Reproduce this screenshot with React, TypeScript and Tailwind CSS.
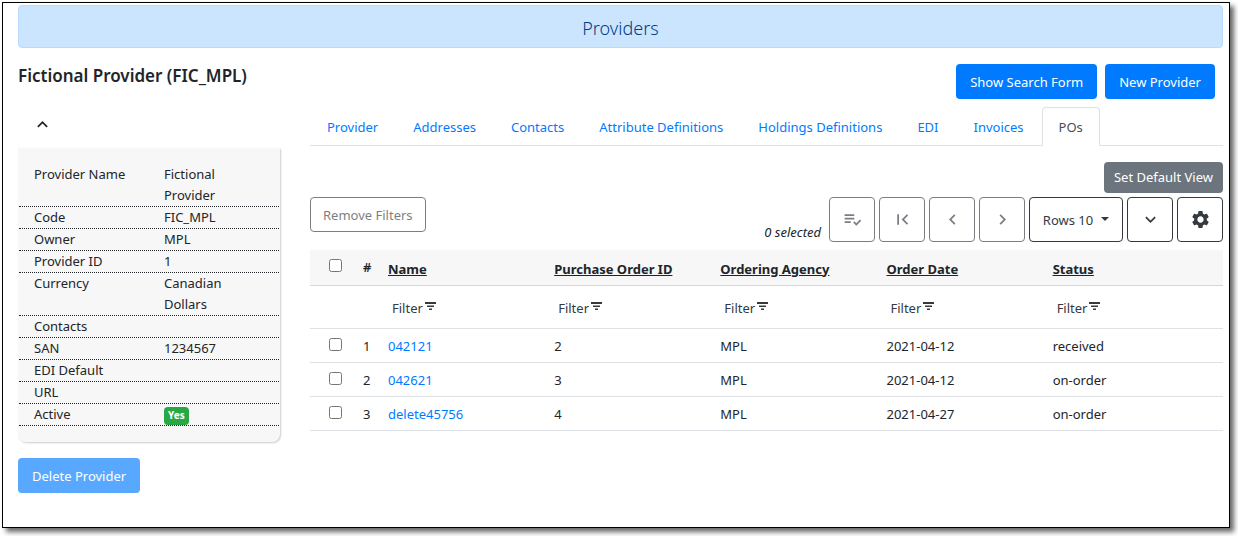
import type { ButtonHTMLAttributes, ReactNode } from 'react';
import {
  MdChevronLeft,
  MdChevronRight,
  MdExpandLess,
  MdExpandMore,
  MdFirstPage,
  MdPlaylistAddCheck,
  MdSettings,
} from 'react-icons/md';

const summary: { label: string; value: ReactNode }[] = [
  { label: 'Provider Name', value: 'Fictional Provider' },
  { label: 'Code', value: 'FIC_MPL' },
  { label: 'Owner', value: 'MPL' },
  { label: 'Provider ID', value: '1' },
  { label: 'Currency', value: 'Canadian Dollars' },
  { label: 'Contacts', value: '' },
  { label: 'SAN', value: '1234567' },
  { label: 'EDI Default', value: '' },
  { label: 'URL', value: '' },
  {
    label: 'Active',
    value: (
      <span className="inline-flex h-[18px] items-center rounded bg-[#28a745] px-1 text-[10px] font-bold text-white">
        Yes
      </span>
    ),
  },
];

const tabs = [
  'Provider',
  'Addresses',
  'Contacts',
  'Attribute Definitions',
  'Holdings Definitions',
  'EDI',
  'Invoices',
  'POs',
];

const columns = ['Name', 'Purchase Order ID', 'Ordering Agency', 'Order Date', 'Status'];

const orders = [
  { name: '042121', id: 2, agency: 'MPL', date: '2021-04-12', status: 'received' },
  { name: '042621', id: 3, agency: 'MPL', date: '2021-04-12', status: 'on-order' },
  { name: 'delete45756', id: 4, agency: 'MPL', date: '2021-04-27', status: 'on-order' },
];

function PrimaryButton(props: ButtonHTMLAttributes<HTMLButtonElement>) {
  return (
    <button
      type="button"
      className="h-[35px] rounded bg-[#007bff] px-3.5 pt-0.5 text-white disabled:opacity-65"
      {...props}
    />
  );
}

function ToolButton({ label, disabled, children }: { label: string; disabled?: boolean; children: ReactNode }) {
  return (
    <button
      type="button"
      aria-label={label}
      disabled={disabled}
      className="flex h-[45px] w-[46px] items-center justify-center rounded border border-[#343a40] text-[21px] text-[#343a40] disabled:opacity-65"
    >
      {children}
    </button>
  );
}

function FilterIcon() {
  return (
    <svg viewBox="0 0 11 9" className="mb-1 h-[9px] w-[11px]" fill="currentColor" aria-hidden="true">
      <path d="M0 0h11v2H0zM2 3.400h7v1.600H2zM4 6.500h3v1.500H4z" />
    </svg>
  );
}

function Sidebar() {
  return (
    <aside>
      <button type="button" aria-label="Collapse summary" className="ml-[14px] mt-[7px] block text-[21px]">
        <MdExpandLess />
      </button>
      <dl className="mt-[13px] rounded-b-lg border-x border-[#f7f7f7] bg-[#f7f7f7] py-4 shadow-[1px_1px_2px_rgba(0,0,0,0.2)]">
        {summary.map((row) => (
          <div key={row.label} className="grid grid-cols-2 border-b border-dotted border-[#212529] leading-[21px]">
            <dt className="px-[15px]">{row.label}</dt>
            <dd className="px-[15px]">{row.value}</dd>
          </div>
        ))}
      </dl>
      <div className="mt-4">
        <PrimaryButton disabled>Delete Provider</PrimaryButton>
      </div>
    </aside>
  );
}

function Toolbar() {
  return (
    <div className="mt-1 flex items-start justify-between">
      <button
        type="button"
        disabled
        className="h-[35px] rounded border border-[#343a40] px-3 pt-0.5 text-[#343a40] disabled:opacity-65"
      >
        Remove Filters
      </button>
      <div className="flex gap-1">
        <span className="mr-1 self-end italic leading-5">0 selected</span>
        <ToolButton label="Select rows" disabled>
          <MdPlaylistAddCheck />
        </ToolButton>
        <ToolButton label="First page" disabled>
          <MdFirstPage />
        </ToolButton>
        <ToolButton label="Previous page" disabled>
          <MdChevronLeft />
        </ToolButton>
        <ToolButton label="Next page" disabled>
          <MdChevronRight />
        </ToolButton>
        <button
          type="button"
          className="flex h-[45px] w-[94px] items-center justify-center gap-2 rounded border border-[#343a40] pt-0.5 text-[#343a40]"
        >
          Rows 10
          <svg viewBox="0 0 8 4" className="mb-1 h-1 w-2" fill="currentColor" aria-hidden="true">
            <path d="M0 0h8L4 4z" />
          </svg>
        </button>
        <ToolButton label="Expand cells">
          <MdExpandMore />
        </ToolButton>
        <ToolButton label="Grid settings">
          <MdSettings />
        </ToolButton>
      </div>
    </div>
  );
}

function OrdersTable() {
  return (
    <table className="mt-2 w-full table-fixed border-collapse text-left">
      <colgroup>
        <col className="w-[45px]" />
        <col className="w-[25px]" />
        <col className="w-[18.2%]" />
        <col className="w-[18.2%]" />
        <col className="w-[18.2%]" />
        <col className="w-[18.2%]" />
        <col />
      </colgroup>
      <thead>
        <tr className="h-[35px] border-b border-[#d5d7d9] bg-[#f7f7f7]">
          <th className="pl-[19px]">
            <input type="checkbox" aria-label="Select all rows" className="mb-1 block size-[13px]" />
          </th>
          <th className="pl-2 font-semibold">#</th>
          {columns.map((name) => (
            <th key={name} className="px-2 pt-1 font-bold">
              <a href="#sort" className="underline">
                {name}
              </a>
            </th>
          ))}
        </tr>
        <tr className="h-[43px] border-b border-[#dee2e6]">
          <td />
          <td />
          {columns.map((name) => (
            <td key={name} className="px-3 pt-1">
              <button type="button" aria-label={`Filter ${name}`} className="flex items-center gap-0.5 text-[#343a40]">
                Filter
                <FilterIcon />
              </button>
            </td>
          ))}
        </tr>
      </thead>
      <tbody>
        {orders.map((order, index) => (
          <tr key={order.name} className="h-[34px] border-b border-[#dee2e6]">
            <td className="pl-[19px]">
              <input type="checkbox" aria-label={`Select ${order.name}`} className="mb-0.5 block size-[13px]" />
            </td>
            <td className="pl-2 pt-1">{index + 1}</td>
            <td className="px-2 pt-1">
              <a href="#order" className="text-[#007bff]">
                {order.name}
              </a>
            </td>
            <td className="px-2 pt-1">{order.id}</td>
            <td className="px-2 pt-1">{order.agency}</td>
            <td className="px-2 pt-1">{order.date}</td>
            <td className="px-2 pt-1">{order.status}</td>
          </tr>
        ))}
      </tbody>
    </table>
  );
}

export default function App() {
  return (
    <div className="bg-white pb-2 pl-0.5 pr-2 pt-0.5 font-['Noto_Sans','Open_Sans',sans-serif] text-[13px] text-[#212529]">
      <div className="border border-black bg-white pb-[34px] pl-[15px] pr-1.5 pt-0.5 shadow-[4px_4px_5px_rgba(0,0,0,0.6)]">
        <h1 className="flex h-[43px] items-center justify-center rounded border border-[#b8daff] bg-[#cce5ff] pt-1 text-[18px] font-light text-[#004085]">
          Providers
        </h1>
        <header className="mt-4 flex items-start justify-between pr-2">
          <h2 className="text-[17px] font-semibold leading-6">Fictional Provider (FIC_MPL)</h2>
          <div className="flex gap-2">
            <PrimaryButton>Show Search Form</PrimaryButton>
            <PrimaryButton>New Provider</PrimaryButton>
          </div>
        </header>
        <div className="mt-2 grid grid-cols-[262px_minmax(0,1fr)] gap-[30px]">
          <Sidebar />
          <main>
            <nav className="flex gap-px border-b border-[#dee2e6]">
              {tabs.map((tab) => (
                <a
                  key={tab}
                  href="#tab"
                  aria-current={tab === 'POs' ? 'page' : undefined}
                  className="-mb-px rounded-t border border-transparent px-4 pb-[7px] pt-[9px] leading-[21px] text-[#007bff] aria-[current=page]:border-[#dee2e6] aria-[current=page]:border-b-white aria-[current=page]:bg-white aria-[current=page]:text-[#495057]"
                >
                  {tab}
                </a>
              ))}
            </nav>
            <div className="mt-4 flex justify-end">
              <button type="button" className="h-[31px] rounded-sm bg-[#6c757d] px-2.5 text-white">
                Set Default View
              </button>
            </div>
            <Toolbar />
            <OrdersTable />
          </main>
        </div>
      </div>
    </div>
  );
}
